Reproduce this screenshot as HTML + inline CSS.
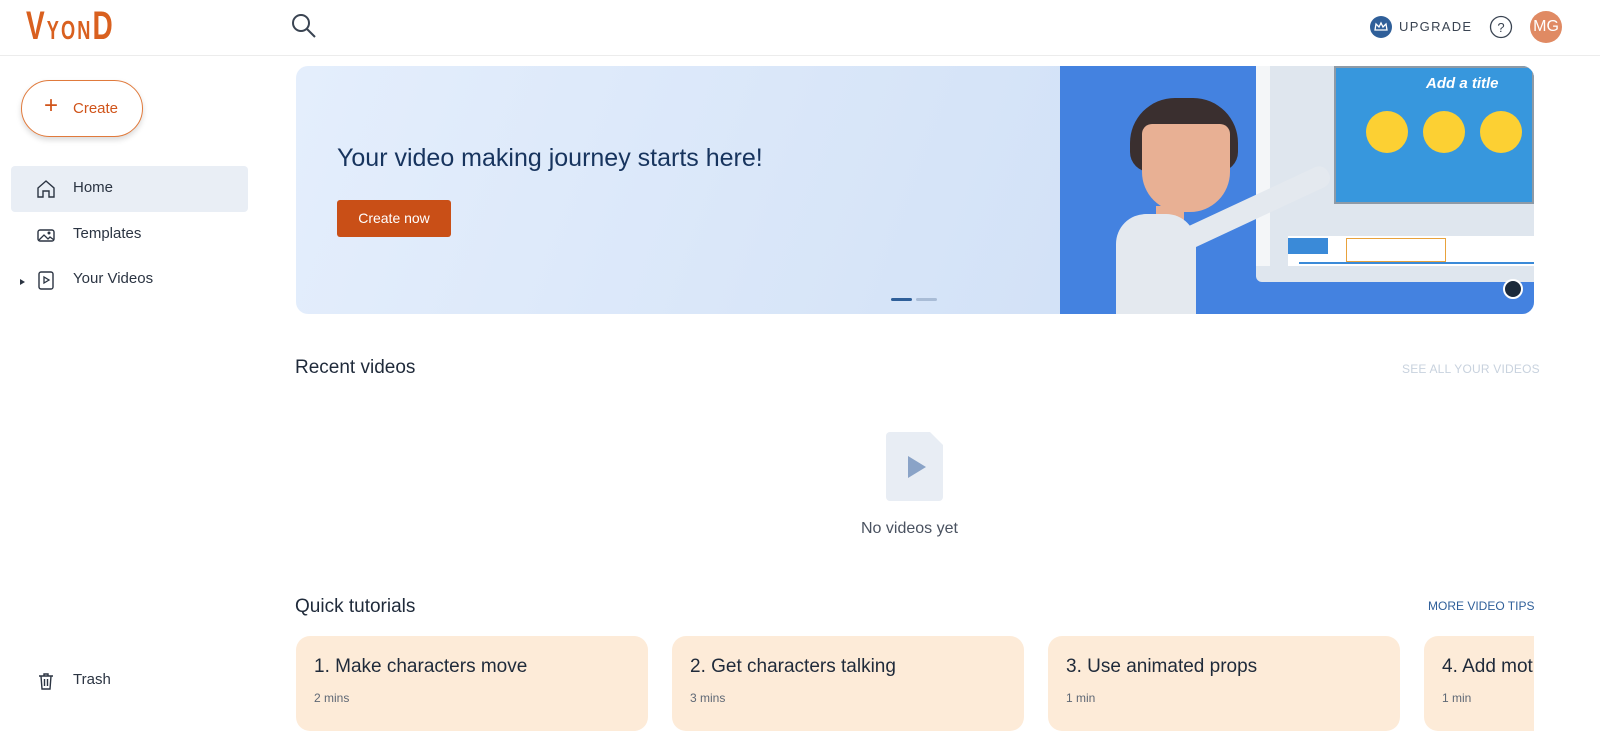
<!DOCTYPE html>
<html><head><meta charset="utf-8"><style>
*{margin:0;padding:0;box-sizing:border-box}
body{width:1600px;height:725px;overflow:hidden;background:#fff;font-family:"Liberation Sans",sans-serif;position:relative;color:#1f2a3a}
.abs{position:absolute}
.nav{left:11px;width:237px;height:46px;border-radius:4px;font-size:15px;color:#2b3442}
.nav span{position:absolute;left:62px;top:13px}
.nav svg{position:absolute;left:25px;top:13px}
.card{top:636px;width:352px;height:95px;background:#fdebd8;border-radius:14px}
.card .t{position:absolute;left:18px;top:20px;font-size:19px;color:#1f2a3a}
.card .m{position:absolute;left:18px;top:55px;font-size:12px;color:#5f6875}
</style></head><body>
<div class="abs" style="left:26px;top:4px;font-family:'Liberation Sans Narrow','Liberation Sans',sans-serif;font-weight:bold;font-size:40px;line-height:44px;color:#d9601f;letter-spacing:3px;transform:scaleX(0.7);transform-origin:left">V<span style="font-size:26px">YON</span>D</div>
<svg class="abs" style="left:290px;top:12px" width="28" height="28" viewBox="0 0 28 28"><circle cx="11" cy="11" r="8" fill="none" stroke="#3a4452" stroke-width="2"/><path d="M17 17l8 8" stroke="#3a4452" stroke-width="2"/></svg>
<div class="abs" style="left:0;top:55px;width:1600px;height:1px;background:#ececec"></div>
<svg class="abs" style="left:1370px;top:16px" width="22" height="22"><circle cx="11" cy="11" r="11" fill="#2f5f99"/><path d="M5 14l1-6 3 3 2-4 2 4 3-3 1 6z" fill="none" stroke="#fff" stroke-width="1.3"/></svg>
<div class="abs" style="left:1399px;top:19px;font-size:13px;letter-spacing:1.3px;color:#3a4452">UPGRADE</div>
<svg class="abs" style="left:1489px;top:15px" width="24" height="24"><circle cx="12" cy="12" r="10.5" fill="none" stroke="#3a4452" stroke-width="1.3"/><text x="12" y="17" font-size="13" text-anchor="middle" fill="#3a4452" font-family="Liberation Sans">?</text></svg>
<div class="abs" style="left:1530px;top:11px;width:32px;height:32px;border-radius:50%;background:#e08a63;color:#fff;font-size:16px;text-align:center;line-height:32px">MG</div>

<div class="abs" style="left:21px;top:80px;width:122px;height:57px;border-radius:29px;border:1.5px solid #e07a3c;box-shadow:0 3px 6px rgba(0,0,0,.15);color:#d0541a;font-size:15px"><span style="position:absolute;left:22px;top:13px;font-size:24px;line-height:24px">+</span><span style="position:absolute;left:51px;top:19px">Create</span></div>

<div class="abs nav" style="top:166px;background:#e9eef5"><svg width="20" height="20" viewBox="0 0 20 20"><path d="M2 9l8-7 8 7v9h-5v-6h-6v6h-5z" fill="none" stroke="#2b3442" stroke-width="1.4"/></svg><span>Home</span></div>
<div class="abs nav" style="top:212px"><svg width="20" height="20" viewBox="0 0 20 20"><rect x="2" y="5" width="16" height="11" rx="2" fill="none" stroke="#2b3442" stroke-width="1.4"/><path d="M3 15l5-5 4 4 2-2 4 3" fill="none" stroke="#2b3442" stroke-width="1.3"/><circle cx="13" cy="8" r="1.5" fill="#2b3442"/></svg><span>Templates</span></div>
<div class="abs nav" style="top:257px"><svg width="20" height="20" viewBox="0 0 20 20"><rect x="3" y="2" width="14" height="17" rx="2" fill="none" stroke="#2b3442" stroke-width="1.4"/><path d="M8 7v6l5-3z" fill="none" stroke="#2b3442" stroke-width="1.3"/></svg><span>Your Videos</span></div>
<div class="abs" style="left:20px;top:279px;border-left:5px solid #2b3442;border-top:3.5px solid transparent;border-bottom:3.5px solid transparent"></div>
<div class="abs nav" style="top:658px"><svg width="20" height="20" viewBox="0 0 20 20"><path d="M3 5h14M8 5V3h4v2M5 5l1 13h8l1-13M8.5 8v7M11.5 8v7" fill="none" stroke="#2b3442" stroke-width="1.4"/></svg><span>Trash</span></div>

<div class="abs" style="left:296px;top:66px;width:1238px;height:248px;border-radius:12px;overflow:hidden;background:linear-gradient(110deg,#e4eefc,#c9dbf4)">
 <div class="abs" style="left:41px;top:78px;font-size:25px;color:#17345e">Your video making journey starts here!</div>
 <div class="abs" style="left:41px;top:134px;width:114px;height:37px;background:#c94f17;border-radius:3px;color:#fff;font-size:14px;text-align:center;line-height:37px">Create now</div>
 <div class="abs" style="left:595px;top:232px;width:21px;height:3px;background:#2f5f99;border-radius:2px"></div>
 <div class="abs" style="left:620px;top:232px;width:21px;height:3px;background:#a9bcd6;border-radius:2px"></div>
 <div class="abs" style="left:764px;top:0;width:474px;height:248px;background:#4482e0">
  <div class="abs" style="left:196px;top:0;width:278px;height:216px;background:#dfe6ee;border-radius:0 0 0 6px">
   <div class="abs" style="left:0;top:0;width:14px;height:200px;background:#f4f6f8"></div>
   <div class="abs" style="left:78px;top:0;width:200px;height:138px;background:#3797dd;border:2px solid #8e9aa6"></div>
   <div class="abs" style="left:170px;top:9px;font-size:15px;font-weight:bold;font-style:italic;color:#fff">Add a title</div>
   <div class="abs" style="left:110px;top:45px;width:42px;height:42px;border-radius:50%;background:#fcd033"></div>
   <div class="abs" style="left:167px;top:45px;width:42px;height:42px;border-radius:50%;background:#fcd033"></div>
   <div class="abs" style="left:224px;top:45px;width:42px;height:42px;border-radius:50%;background:#fcd033"></div>
   <div class="abs" style="left:32px;top:170px;width:246px;height:30px;background:#fff"></div>
   <div class="abs" style="left:32px;top:172px;width:40px;height:16px;background:#3a8ad8"></div>
   <div class="abs" style="left:90px;top:172px;width:100px;height:24px;border:1px solid #e8a23c"></div>
   <div class="abs" style="left:43px;top:196px;width:235px;height:2px;background:#3a8ad8"></div>
  </div>
  <div class="abs" style="left:70px;top:32px;width:108px;height:74px;background:#3a2f2f;border-radius:45px 45px 20px 20px"></div>
  <div class="abs" style="left:82px;top:58px;width:88px;height:88px;background:#e8b094;border-radius:10px 10px 40px 40px"></div>
  <div class="abs" style="left:96px;top:140px;width:28px;height:25px;background:#e8b094"></div>
  <div class="abs" style="left:56px;top:148px;width:80px;height:100px;background:#e4e9ef;border-radius:30px 30px 0 0"></div>
  <div class="abs" style="left:110px;top:170px;width:175px;height:22px;background:#e4e9ef;transform:rotate(-25deg);transform-origin:left;border-radius:10px"></div>
  <div class="abs" style="left:443px;top:213px;width:20px;height:20px;border-radius:50%;background:#1c2a3a;border:2px solid #fff"></div>
 </div>
</div>

<div class="abs" style="left:295px;top:357px;font-size:19px">Recent videos</div>
<div class="abs" style="left:1402px;top:362px;font-size:12px;color:#c8d2de;letter-spacing:.2px">SEE ALL YOUR VIDEOS</div>
<svg class="abs" style="left:886px;top:432px" width="57" height="69"><path d="M0 4a4 4 0 014-4h40l13 13v52a4 4 0 01-4 4H4a4 4 0 01-4-4z" fill="#e8edf4"/><path d="M22 24v22l18-11z" fill="#8aa3c7"/></svg>
<div class="abs" style="left:861px;top:520px;font-size:16px;color:#4a5260">No videos yet</div>

<div class="abs" style="left:295px;top:596px;font-size:19px">Quick tutorials</div>
<div class="abs" style="left:1428px;top:599px;font-size:12px;color:#2f5f99">MORE VIDEO TIPS</div>
<div class="abs card" style="left:296px"><div class="t">1. Make characters move</div><div class="m">2 mins</div></div>
<div class="abs card" style="left:672px"><div class="t">2. Get characters talking</div><div class="m">3 mins</div></div>
<div class="abs card" style="left:1048px"><div class="t">3. Use animated props</div><div class="m">1 min</div></div>
<div class="abs" style="left:1424px;top:636px;width:110px;height:95px;overflow:hidden"><div class="abs card" style="left:0;top:0;border-radius:14px 0 0 14px"><div class="t">4. Add motion</div><div class="m">1 min</div></div></div>
</body></html>
